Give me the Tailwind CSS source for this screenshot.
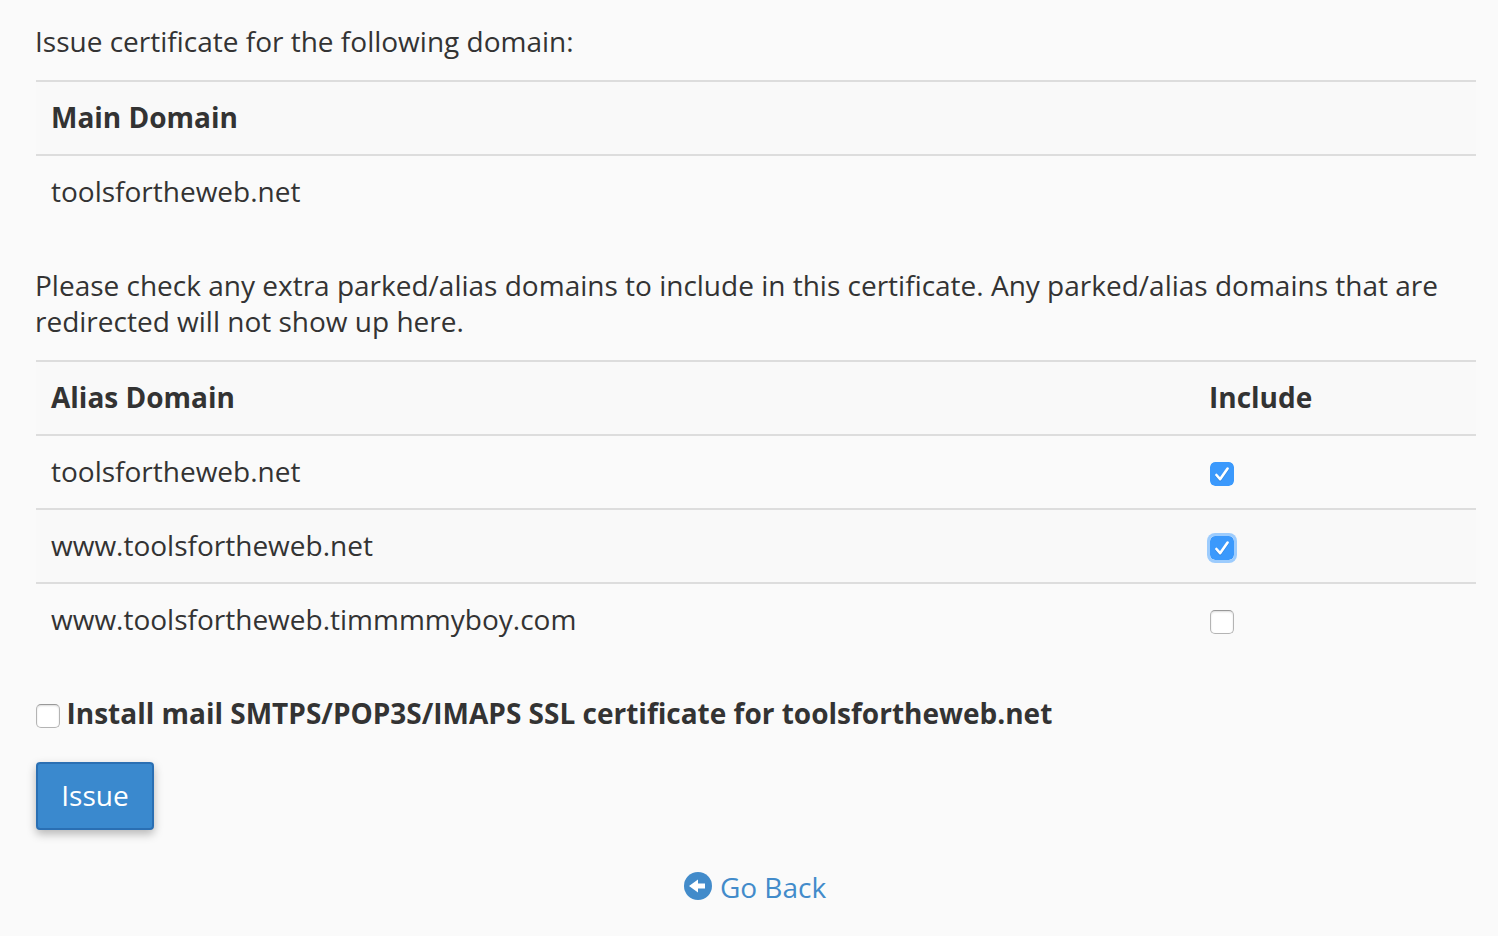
<!DOCTYPE html>
<html lang="en">
<head>
<meta charset="utf-8">
<title>Issue certificate</title>
<script src="https://cdn.jsdelivr.net/npm/@tailwindcss/browser@4"></script>
</head>
<body class="bg-[#fafafa] font-['Open_Sans',sans-serif] text-[28px] leading-9 text-[#333]">
<main class="h-[936px] w-[1476px] overflow-hidden pt-[23px] pl-9">
  <p class="-ml-px">Issue certificate for the following domain:</p>
  <table class="mt-[21px] w-full table-fixed border-separate border-spacing-0 text-left">
    <thead>
      <tr class="bg-[#f9f9f9]"><th class="h-[74px] border-t-2 border-[#ddd] px-[15px] pt-[17px] pb-0 align-top font-bold">Main Domain</th></tr>
    </thead>
    <tbody>
      <tr><td class="h-[74px] border-t-2 border-[#ddd] px-[15px] pt-[17px] pb-0 align-top">toolsfortheweb.net</td></tr>
    </tbody>
  </table>
  <p class="mt-[39px] -ml-px">Please check any extra parked/alias domains to include in this certificate. Any parked/alias domains that are redirected will not show up here.</p>
  <table class="mt-[21px] w-full table-fixed border-separate border-spacing-0 text-left">
    <thead>
      <tr class="bg-[#f9f9f9]">
        <th class="h-[74px] w-[1158px] border-t-2 border-[#ddd] px-[15px] pt-[17px] pb-0 align-top font-bold">Alias Domain</th>
        <th class="h-[74px] border-t-2 border-[#ddd] px-[15px] pt-[17px] pb-0 align-top font-bold">Include</th>
      </tr>
    </thead>
    <tbody>
      <tr>
        <td class="h-[74px] border-t-2 border-[#ddd] px-[15px] pt-[17px] pb-0 align-top">toolsfortheweb.net</td>
        <td class="h-[74px] border-t-2 border-[#ddd] px-4 pt-[26px] pb-0 align-top">
          <svg class="block size-6 rounded-[5px]" viewBox="0 0 24 24"><rect width="24" height="24" rx="5" fill="#3b99fc"/><path d="M6.4 14l3.7 4.2 7.5-10.7" fill="none" stroke="#1f6fc4" stroke-opacity=".5" stroke-width="2.6" stroke-linecap="round" stroke-linejoin="round"/><path d="M6.4 13l3.7 4.2 7.5-10.7" fill="none" stroke="#fff" stroke-width="2.6" stroke-linecap="round" stroke-linejoin="round"/></svg>
        </td>
      </tr>
      <tr class="bg-[#f9f9f9]">
        <td class="h-[74px] border-t-2 border-[#ddd] px-[15px] pt-[17px] pb-0 align-top">www.toolsfortheweb.net</td>
        <td class="h-[74px] border-t-2 border-[#ddd] px-4 pt-[26px] pb-0 align-top">
          <svg class="block size-6 rounded-[5px] ring-3 ring-[#9dccfd]" viewBox="0 0 24 24"><rect width="24" height="24" rx="5" fill="#3b99fc"/><path d="M6.4 14l3.7 4.2 7.5-10.7" fill="none" stroke="#1f6fc4" stroke-opacity=".5" stroke-width="2.6" stroke-linecap="round" stroke-linejoin="round"/><path d="M6.4 13l3.7 4.2 7.5-10.7" fill="none" stroke="#fff" stroke-width="2.6" stroke-linecap="round" stroke-linejoin="round"/></svg>
        </td>
      </tr>
      <tr>
        <td class="h-[74px] border-t-2 border-[#ddd] px-[15px] pt-[17px] pb-0 align-top">www.toolsfortheweb.timmmmyboy.com</td>
        <td class="h-[74px] border-t-2 border-[#ddd] px-4 pt-[26px] pb-0 align-top">
          <div class="size-6 rounded-[5px] border border-[#b4b4b4] border-t-[#999] bg-white shadow-[inset_0_1px_2px_#dcdcdc]"></div>
        </td>
      </tr>
    </tbody>
  </table>
  <div class="mt-[39px] flex gap-[6.5px] font-bold">
    <div class="mt-[9px] size-6 rounded-[5px] border border-[#b4b4b4] border-t-[#999] bg-white shadow-[inset_0_1px_2px_#dcdcdc]"></div>
    <span>Install mail SMTPS/POP3S/IMAPS SSL certificate for toolsfortheweb.net</span>
  </div>
  <button class="mt-[31px] block h-[68px] w-[118px] rounded border-2 border-[#2a6fb3] bg-[#3a89ce] pb-0.5 text-white shadow-[0_4px_10px_rgba(0,0,0,0.28)]">Issue</button>
  <a class="mt-[39px] flex justify-center gap-2 pr-0.5 text-[#428bca]">
    <svg class="mt-[3px] size-7" viewBox="0 0 28 28"><circle cx="14" cy="14" r="14" fill="#428bca"/><path d="M5 14l9-6.5v4h7v5h-7v4z" fill="#fff"/></svg>
    <span>Go Back</span>
  </a>
</main>
</body>
</html>
